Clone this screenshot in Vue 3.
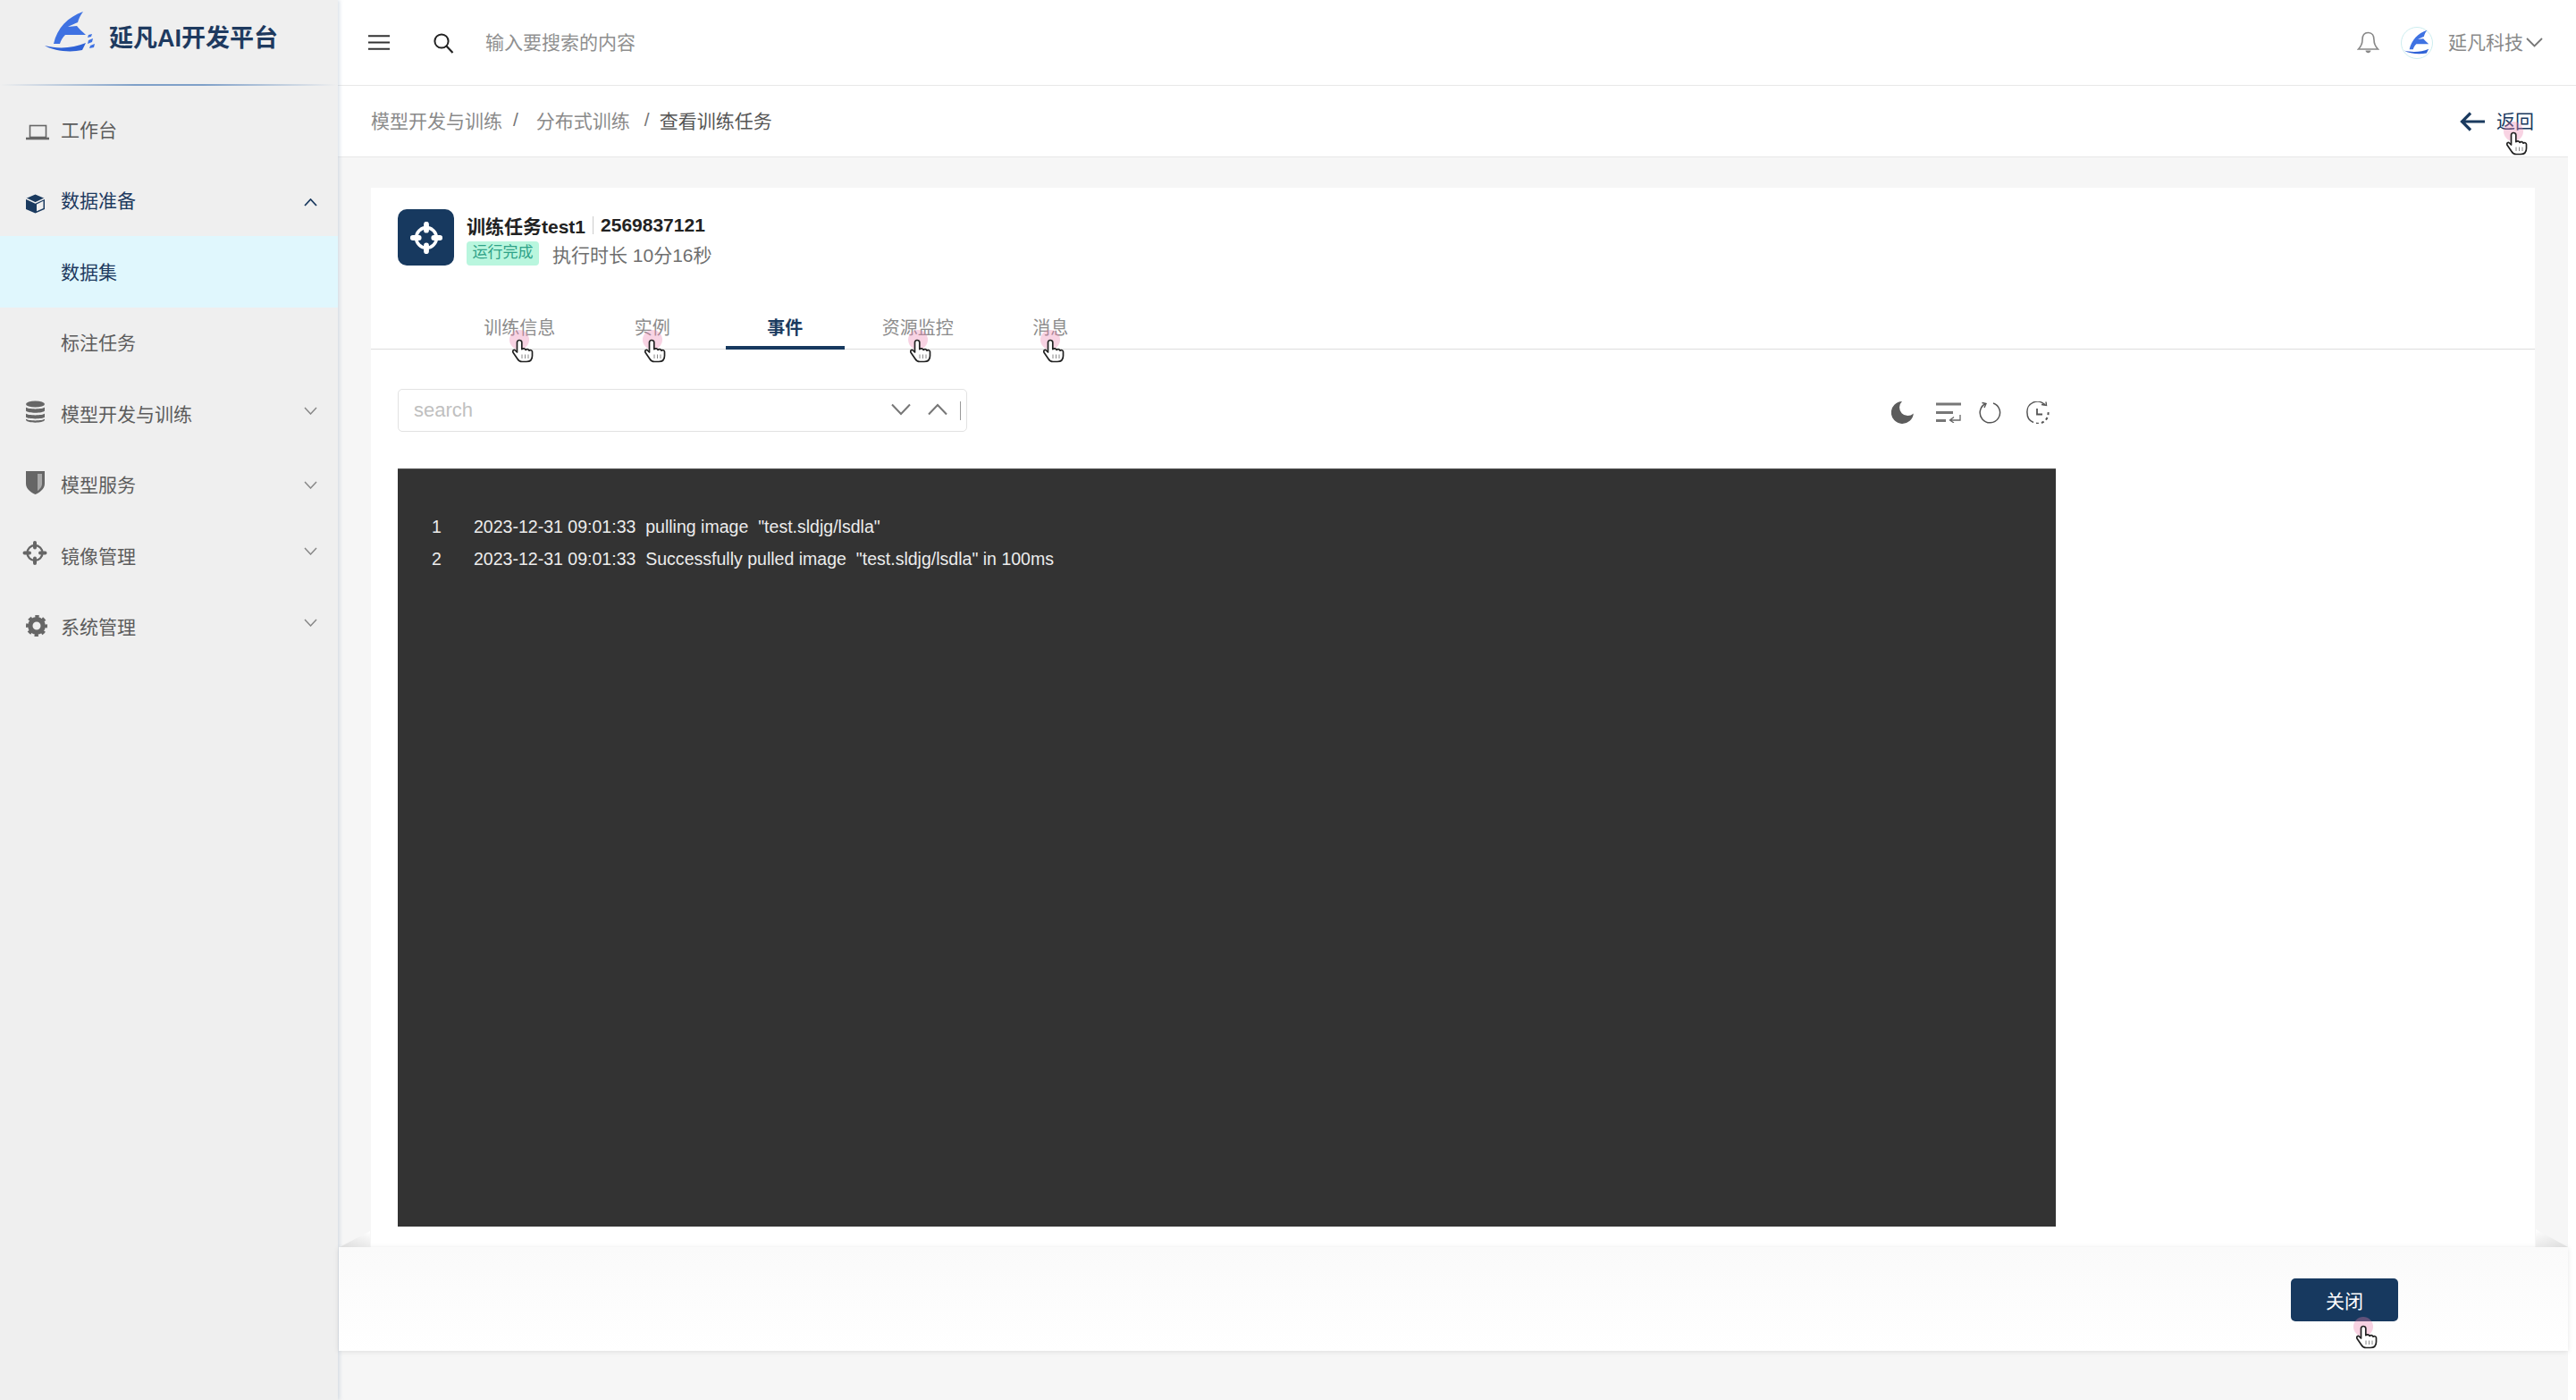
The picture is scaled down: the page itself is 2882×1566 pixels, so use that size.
<script setup>
const subChevron = 'M1 1 L7.5 8 L14 1'
const menu = [
  { label: '工作台', icon: 'laptop' },
  { label: '数据准备', icon: 'cube', open: true, dark: true, dy: 2 },
  { label: '数据集', child: true, active: true },
  { label: '标注任务', child: true },
  { label: '模型开发与训练', icon: 'db', arrow: true, dy: -3 },
  { label: '模型服务', icon: 'shield', arrow: true, dy: 0 },
  { label: '镜像管理', icon: 'cross', arrow: true, dy: -5 },
  { label: '系统管理', icon: 'gear', arrow: true, dy: -5 }
]
const tabs = ['训练信息', '实例', '事件', '资源监控', '消息']
const logs = [
  { n: 1, t: '2023-12-31 09:01:33  pulling image  "test.sldjg/lsdla"' },
  { n: 2, t: '2023-12-31 09:01:33  Successfully pulled image  "test.sldjg/lsdla" in 100ms' }
]
const clicks = [
  { x: 581, y: 380, hx: 585, hy: 392 },
  { x: 730, y: 380, hx: 733, hy: 392 },
  { x: 1027, y: 380, hx: 1030, hy: 392 },
  { x: 1175, y: 380, hx: 1179, hy: 392 },
  { x: 2812, y: 147, hx: 2816, hy: 160 },
  { x: 2644, y: 1484, hx: 2648, hy: 1495 }
]
</script>

<template>
  <div class="app">
    <aside class="sidebar">
      <div class="brand">
        <svg class="logo" width="80" height="60" viewBox="0 0 80 60">
          <path fill="#3f72e2" d="M53 8C36 14 24 26 20 44L27 44C28 40 30 37 33 34L56 34C52 30 48 27 46 24L36 25C40 23 44 21 47 20C48 16 50 12 53 8Z" />
          <path fill="#2f62d6" d="M10 46C25 50 42 49 56 43L52 51C38 54 20 52 10 46Z" />
          <path fill="#3f72e2" d="M59 40l5-2-1 4-5 2zM61 46l5-2-1 4-5 1zM59 34l4-1-1 3-4 1z" />
        </svg>
        <span class="brand-name">延凡AI开发平台</span>
      </div>
      <div class="brand-line"></div>
      <nav class="menu">
        <div v-for="m in menu" :key="m.label" class="item" :class="{ active: m.active, dark: m.dark || m.active }">
          <span class="ico">
            <svg v-if="m.icon" width="32" height="32" viewBox="0 0 32 32" class="ico-svg">
              <g v-if="m.icon === 'laptop'" fill="none" stroke="#666">
                <rect x="8.5" y="11.5" width="18" height="13" stroke-width="1.6" />
                <path d="M4 26H30" stroke-width="2.6" />
              </g>
              <g v-else-if="m.icon === 'cube'">
                <path fill="#1a3a5f" d="M14.5 9.5L25 14V26L14.5 30.5L4 26V14Z" />
                <path fill="#efefef" d="M16 20.5L23.5 16.8V25L16 28.2Z" />
                <path fill="none" stroke="#efefef" stroke-width="1.4" d="M4 14L14.5 19L25 14" />
              </g>
              <g v-else-if="m.icon === 'db'" fill="#666">
                <ellipse cx="14.5" cy="5" rx="10.5" ry="3.6" />
                <path d="M4 8.5C6 11 23 11 25 8.5V12.5C23 15.5 6 15.5 4 12.5Z" />
                <path d="M4 15.5C6 18 23 18 25 15.5V19.5C23 22 6 22 4 19.5Z" />
                <path d="M4 21.5C6 24 23 24 25 21.5V23C23 26.5 6 26.5 4 23Z" />
              </g>
              <g v-else-if="m.icon === 'shield'">
                <path fill="#666" d="M4 1H25V15C25 21 19 25 14.5 27C10 25 4 21 4 15Z" />
                <path fill="#a8a8a8" d="M17 4H22V15C22 19 19 21.5 17 23Z" />
              </g>
              <g v-else-if="m.icon === 'cross'" transform="translate(1 -0.5)" fill="none" stroke="#666">
                <circle cx="13" cy="13" r="8.5" stroke-width="2.4" />
                <path d="M13 1.5V7M13 19V24.5M1.5 13H7M19 13H24.5" stroke-width="4" stroke-linecap="round" />
              </g>
              <g v-else-if="m.icon === 'gear'" fill="none" stroke="#666">
                <circle cx="16" cy="15" r="7.2" stroke-width="5.4" />
                <circle cx="16" cy="15" r="10.4" stroke-width="3.2" stroke-dasharray="4.3 3.87" stroke-dashoffset="2" />
              </g>
            </svg>
          </span>
          <span class="label">{{ m.label }}</span>
          <svg v-if="m.arrow" class="chev" :style="{ marginTop: m.dy * 2 + 'px' }" width="15" height="9" viewBox="0 0 15 9"><path :d="subChevron" fill="none" stroke="#888" stroke-width="1.5" /></svg>
          <svg v-if="m.open" class="chev" :style="{ marginTop: m.dy * 2 + 'px' }" width="15" height="9" viewBox="0 0 15 9"><path d="M1 8L7.5 1L14 8" fill="none" stroke="#1a3a5f" stroke-width="1.8" /></svg>
        </div>
      </nav>
    </aside>

    <div class="main">
      <header class="topbar">
        <svg class="burger" width="24" height="17" viewBox="0 0 24 17"><path d="M0 1.2H24M0 8.5H24M0 15.8H24" stroke="#333" stroke-width="2" /></svg>
        <svg class="search-ico" width="24" height="24" viewBox="0 0 24 24"><circle cx="10" cy="10" r="7.6" fill="none" stroke="#222" stroke-width="2" /><path d="M15.5 15.5L22.5 23" stroke="#222" stroke-width="2.2" /></svg>
        <span class="search-text">输入要搜索的内容</span>
        <div class="top-right">
          <svg width="25" height="25" viewBox="0 0 25 25"><path d="M12.5 1.5C8 1.5 6 5 6 9.5C6 14 4.5 17 1.5 20H23.5C20.5 17 19 14 19 9.5C19 5 17 1.5 12.5 1.5Z" fill="none" stroke="#888" stroke-width="1.6" /><path d="M9.5 21.5C10 25 15 25 15.5 21.5Z" fill="#888" /></svg>
          <span class="avatar">
            <svg width="30" height="31" viewBox="9 6 50 50">
              <path fill="#3f72e2" d="M53 8C36 14 24 26 20 44L27 44C28 40 30 37 33 34L56 34C52 30 48 27 46 24L36 25C40 23 44 21 47 20C48 16 50 12 53 8Z" />
              <path fill="#2f62d6" d="M10 46C25 50 42 49 56 43L52 51C38 54 20 52 10 46Z" />
            </svg>
          </span>
          <span class="company">延凡科技</span>
          <svg width="19" height="11" viewBox="0 0 19 11"><path d="M1 1L9.5 9.5L18 1" fill="none" stroke="#777" stroke-width="1.8" /></svg>
        </div>
      </header>

      <div class="crumbs">
        <span class="c-link">模型开发与训练</span>
        <span class="c-sep s1">/</span>
        <span class="c-link">分布式训练</span>
        <span class="c-sep s2">/</span>
        <span class="c-cur">查看训练任务</span>
        <div class="back">
          <svg width="28" height="22" viewBox="0 0 28 22"><path d="M28 11H3M12 1.5L2.5 11L12 20.5" fill="none" stroke="#1a3a5f" stroke-width="3.2" /></svg>
          <span>返回</span>
        </div>
      </div>

      <div class="content">
        <section class="card">
          <div class="task-head">
            <div class="task-icon">
              <svg width="36" height="36" viewBox="0 0 26 26" fill="none" stroke="#fff">
                <circle cx="13" cy="13" r="8.2" stroke-width="2.6" />
                <path d="M13 2V7M13 19V24M2 13H7M19 13H24" stroke-width="4.2" stroke-linecap="round" />
              </svg>
            </div>
            <div class="task-info">
              <div class="task-title"><span>训练任务test1</span><i></i><span>2569837121</span></div>
              <div class="task-meta"><span class="badge">运行完成</span><span class="dur">执行时长 10分16秒</span></div>
            </div>
          </div>

          <div class="tabs">
            <div v-for="t in tabs" :key="t" class="tab" :class="{ on: t === '事件' }">{{ t }}</div>
          </div>

          <div class="log-area">
            <div class="toolbar">
              <div class="search-box">
                <span class="ph">search</span>
                <svg class="sb-a" width="22" height="14" viewBox="0 0 22 14"><path d="M1 1.5L11 12L21 1.5" fill="none" stroke="#777" stroke-width="2" /></svg>
                <svg class="sb-b" width="22" height="14" viewBox="0 0 22 14"><path d="M1 12.5L11 2L21 12.5" fill="none" stroke="#777" stroke-width="2" /></svg>
                <i class="caret"></i>
              </div>
              <div class="tools">
                <svg width="25" height="25" viewBox="0 0 25 25"><path fill="#5c5c5c" d="M12 0A12.5 12.5 0 1 0 24.8 13.5A8.5 8.5 0 0 1 12 0Z" /></svg>
                <svg class="t2" width="28" height="23" viewBox="0 0 28 23"><path d="M0 2H28M0 11.5H19M0 20.5H11" stroke="#777" stroke-width="3" /><path d="M27 14V20H16M20 16.5L15.5 20L20 23" fill="none" stroke="#666" stroke-width="1.3" /></svg>
                <svg class="t3" width="25" height="25" viewBox="0 0 25 25"><path d="M7.5 2.5A11.2 11.2 0 1 0 16 2" fill="none" stroke="#555" stroke-width="1.5" /><path d="M3.5 1.5L8 2.5L6 7" fill="none" stroke="#555" stroke-width="1.4" /></svg>
                <svg class="t4" width="27" height="25" viewBox="0 0 27 25"><path d="M22 4A11.5 11.5 0 0 0 2 13C2 18 5 22 9 23.5" fill="none" stroke="#555" stroke-width="1.5" /><path d="M12 24.5A11.5 11.5 0 0 0 25.5 12" fill="none" stroke="#555" stroke-width="2" stroke-dasharray="3 3" /><path d="M18 3.5L23.5 4.5L23 0.5" fill="none" stroke="#555" stroke-width="1.4" /><path d="M13 8V14.5H19" fill="none" stroke="#555" stroke-width="1.8" /></svg>
              </div>
            </div>
            <div class="terminal">
              <div v-for="l in logs" :key="l.n" class="line"><span class="num">{{ l.n }}</span><span class="txt">{{ l.t }}</span></div>
            </div>
          </div>
        </section>

        <footer class="footer">
          <button class="close-btn">关闭</button>
        </footer>
      </div>
    </div>

    <div class="clicks">
      <template v-for="(c, i) in clicks" :key="i">
        <i class="ripple" :style="{ left: c.x + 'px', top: c.y + 'px' }"></i>
        <svg class="hand" width="24" height="27" viewBox="0 0 24 27" :style="{ left: c.hx + 'px', top: c.hy + 'px' }">
          <path fill="#fff" stroke="#222" stroke-width="1.7" stroke-linejoin="round" d="M8 1.5C6.5 1.5 5.5 2.6 5.5 4V15L3.5 13C2 11.6 -0.2 13.4 1.2 15.4L6 22.5C7.2 24.6 9 25.5 11 25.5H16C20 25.5 22.5 23 22.5 19V14.5C22.5 12.6 20 12 19 13.2C18.6 11.4 16 11 15 12.4C14.6 10.6 12 10.4 10.8 11.6V4C10.8 2.6 9.6 1.5 8 1.5Z" />
          <path d="M11 17.5V22M14.5 17.5V22M18 17.5V22" stroke="#888" stroke-width="1" />
        </svg>
      </template>
    </div>
  </div>
</template>

<style scoped>
.app { position: relative; display: flex; width: 2882px; height: 1566px; overflow: hidden; background: #fff; font-family: "Liberation Sans", "Noto Sans CJK SC", sans-serif; font-size: 21px; color: #555; padding-right: 9px; box-sizing: border-box; }
.sidebar { position: relative; z-index: 1; flex: 0 0 378px; background: #efefef; box-shadow: 2px 0 4px rgba(165, 182, 200, .4); }
.brand { display: flex; height: 94px; padding: 5px 0 0 40px; box-sizing: border-box; }
.logo { margin-right: 2px; }
.brand-name { margin-top: 23px; font-size: 27px; line-height: 30px; font-weight: 700; color: #1e3a5f; white-space: nowrap; }
.brand-line { height: 2px; background: linear-gradient(90deg, transparent, #7fa0c8 40%, #7fa0c8 60%, transparent); }
.menu { padding-top: 9px; }
.item { display: flex; align-items: center; height: 79.5px; padding-right: 23px; color: #5c5c5c; }
.item.dark { color: #1e3a5f; }
.item.active { background: #e0f7fd; }
.ico { flex: 0 0 43px; margin-left: 25px; height: 32px; }
.ico-svg { display: block; overflow: visible; }
.label { flex: 1; margin-bottom: 2px; }
.chev { flex: none; }
.main { position: relative; flex: 1; min-width: 0; display: flex; flex-direction: column; }
.topbar { display: flex; align-items: center; height: 96px; flex: none; width: 2504px; padding-left: 34px; box-sizing: border-box; background: #fff; border-bottom: 1px solid #e8e8e8; }
.burger { margin-right: 48px; }
.search-ico { margin-right: 35px; }
.search-text { color: #8f8f8f; margin-bottom: 3px; }
.top-right { display: flex; align-items: center; margin-left: auto; padding-right: 37px; }
.avatar { display: flex; align-items: center; justify-content: center; width: 36px; height: 36px; box-sizing: border-box; margin: 0 17px 0 24px; border: 1px solid #cdeef0; border-radius: 50%; }
.company { margin-right: 3px; color: #8a8a8a; margin-bottom: 3px; }
.crumbs { display: flex; align-items: center; height: 80px; flex: none; padding-left: 37px; box-sizing: border-box; background: #fff; border-bottom: 1px solid #e8e8e8; }
.c-link, .c-sep, .c-cur { margin-bottom: 3px; }
.c-link { color: #8a8a8a; }
.c-sep { color: #777; }
.s1 { margin-left: 12px; margin-right: 20px; }
.s2 { margin-left: 16px; margin-right: 11px; }
.c-cur { color: #555; }
.back { display: flex; align-items: center; gap: 13px; margin-left: auto; padding-right: 38px; color: #1a3a5f; }
.back span { margin-bottom: 3px; }
.content { flex: 1; display: flex; flex-direction: column; padding-top: 34px; background: #f6f6f6; }
.card { height: 1185px; flex: none; margin: 0 37px; background: #fff; box-sizing: border-box; }
.task-head { display: flex; gap: 14px; height: 87px; box-sizing: border-box; padding: 24px 30px 0; }
.task-icon { display: flex; align-items: center; justify-content: center; width: 63px; height: 63px; background: #17395f; border-radius: 10px; }
.task-info { padding-top: 5px; }
.task-title { display: flex; align-items: center; height: 26px; font-weight: 700; color: #222; }
.task-title i { width: 1px; height: 20px; margin: 0 8px; background: #ccc; }
.task-meta { display: flex; align-items: center; height: 27px; margin-top: 5px; }
.badge { width: 81px; height: 27px; line-height: 26px; text-align: center; font-size: 17px; color: #2ea287; background: #b9f6de; border-radius: 4px; }
.dur { margin-left: 15px; color: #6f6f6f; line-height: 27px; padding-top: 3px; }
.tabs { display: grid; grid-template-columns: repeat(5, 148.5px); height: 94px; padding-left: 92px; border-bottom: 1px solid #ddd; box-sizing: border-box; align-items: end; }
.tab { position: relative; height: 49px; line-height: 52px; text-align: center; font-size: 20px; color: #8c8c8c; }
.tab.on { color: #1a3a5f; font-weight: 700; }
.tab.on::after { content: ""; position: absolute; left: 8px; right: 7.5px; bottom: -1px; height: 4px; background: #17395f; }
.log-area { padding: 44px 30px 0; }
.toolbar { display: flex; justify-content: space-between; align-items: flex-start; width: 1855px; height: 48px; }
.search-box { display: flex; align-items: center; width: 637px; height: 48px; padding-left: 17px; box-sizing: border-box; border: 1px solid #e2e2e2; border-radius: 5px; position: relative; }
.ph { flex: 1; color: #c0c0c0; font-size: 22px; }
.sb-a { margin-right: 19px; position: relative; top: -1px; }
.sb-b { margin-right: 14px; position: relative; top: -1px; }
.caret { width: 1px; height: 21px; margin-right: 6px; background: #999; }
.tools { display: flex; align-items: center; padding: 14px 7px 0 0; }
.t2 { margin-left: 25px; }
.t3 { margin-left: 20px; }
.t4 { margin-left: 27px; }
.terminal { width: 1855px; height: 848px; margin-top: 41px; padding: 46px 0 0 38px; box-sizing: border-box; background: #333; border-top: 1px solid #555; color: #ececec; font-size: 19.55px; }
.line { display: flex; height: 36px; line-height: 36px; }
.num { flex: 0 0 47px; }
.txt { white-space: pre; }
.footer { position: relative; display: flex; justify-content: flex-end; align-items: flex-start; height: 116px; flex: none; margin-left: 1px; padding: 35px 190px 0 0; box-sizing: border-box; background: linear-gradient(#fafafa, #fff); box-shadow: 0 1px 6px rgba(0, 0, 0, .1); z-index: 2; }
.footer::before, .footer::after { content: ""; position: absolute; bottom: 100%; }
.footer::before { left: 1px; width: 34px; height: 18px; background: linear-gradient(200deg, #fff, #dcdcdc); clip-path: polygon(0 100%, 100% 0, 100% 100%); }
.footer::after { right: 0; width: 36px; height: 20px; background: linear-gradient(160deg, #fff, #dcdcdc); clip-path: polygon(0 0, 100% 100%, 0 100%); }
.close-btn { width: 120px; height: 48px; padding: 0; border: 0; border-radius: 5px; background: #17395f; color: #fff; font: inherit; }
.clicks { position: absolute; inset: 0; z-index: 10; pointer-events: none; }
.ripple { position: absolute; width: 22px; height: 22px; margin: -11px 0 0 -11px; border-radius: 50%; background: rgba(236, 130, 175, .35); }
.hand { position: absolute; margin: -13px 0 0 -12px; }
</style>
